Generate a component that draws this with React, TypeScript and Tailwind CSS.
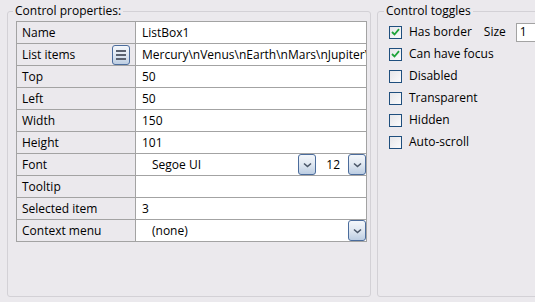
import { ReactNode } from 'react';

const font = { fontFamily: '"Open Sans", "Noto Sans", sans-serif' };

function DropButton() {
  return (
    <div className="w-[18px] h-[21px] shrink-0 rounded-[3px] border border-[#4b6c9c] bg-gradient-to-b from-[#f4f7fb] via-[#dfe7f1] to-[#bccde2] flex items-center justify-center">
      <svg width="9" height="6" viewBox="0 0 9 6">
        <path d="M1 1.5 L4.5 4.5 L8 1.5" stroke="#4a5668" strokeWidth="1.6" fill="none" />
      </svg>
    </div>
  );
}

function ListButton() {
  return (
    <div className="w-[18px] h-[20px] shrink-0 rounded-[3px] border border-[#4b6c9c] bg-gradient-to-b from-[#f4f7fb] via-[#dfe7f1] to-[#bccde2] flex flex-col items-center justify-center gap-[2px]">
      <div className="w-[10px] h-[2px] bg-[#5b6270]" />
      <div className="w-[10px] h-[2px] bg-[#5b6270]" />
      <div className="w-[10px] h-[2px] bg-[#5b6270]" />
    </div>
  );
}

function Check({ checked, label, extra }: { checked?: boolean; label: string; extra?: ReactNode }) {
  return (
    <div className="h-[22px] flex items-center whitespace-nowrap">
      <div className="w-[13px] h-[13px] shrink-0 border border-[#1f4f7e] bg-gradient-to-br from-[#e6e6e9] to-[#fbfbfc] flex items-center justify-center">
        {checked && (
          <svg width="9" height="8" viewBox="0 0 9 8">
            <path d="M1 4 L3.5 6.5 L8 1.2" stroke="#1fa33a" strokeWidth="1.8" fill="none" />
          </svg>
        )}
      </div>
      <span className="ml-[7px]">{label}</span>
      {extra}
    </div>
  );
}

export default function App() {
  const rows: { label: string; value: ReactNode; labelExtra?: ReactNode }[] = [
    { label: 'Name', value: <span className="pl-[6px]">ListBox1</span> },
    {
      label: 'List items',
      labelExtra: <ListButton />,
      value: <span className="pl-[6px] whitespace-nowrap">Mercury\nVenus\nEarth\nMars\nJupiter\nSaturn</span>,
    },
    { label: 'Top', value: <span className="pl-[6px]">50</span> },
    { label: 'Left', value: <span className="pl-[6px]">50</span> },
    { label: 'Width', value: <span className="pl-[6px]">150</span> },
    { label: 'Height', value: <span className="pl-[6px]">101</span> },
    {
      label: 'Font',
      value: (
        <div className="flex items-center h-full w-full">
          <span className="pl-[16px] flex-1">Segoe UI</span>
          <DropButton />
          <span className="w-[32px] text-right pr-[8px]">12</span>
          <DropButton />
        </div>
      ),
    },
    { label: 'Tooltip', value: <span /> },
    { label: 'Selected item', value: <span className="pl-[6px]">3</span> },
    {
      label: 'Context menu',
      value: (
        <div className="flex items-center h-full w-full">
          <span className="pl-[16px] flex-1">(none)</span>
          <DropButton />
        </div>
      ),
    },
  ];

  return (
    <div className="w-[535px] h-[302px] overflow-hidden bg-[#ebe9ed] text-[12px] text-black flex pt-[3px]" style={font}>
      <fieldset className="ml-[7px] w-[364px] shrink-0 h-[294px] border border-[#d3d1d6] rounded-[3px] pl-[8px] pt-[2px]">
        <legend className="-ml-[3px] px-[2px] leading-[16px]">Control properties:</legend>
        <div className="w-[351px] border-t border-l border-[#a3a3a3]">
          {rows.map((r) => (
            <div key={r.label} className="flex h-[22px] border-b border-[#a3a3a3]">
              <div className="w-[119px] shrink-0 border-r border-[#a3a3a3] bg-[#ebe9ed] flex items-center pl-[5px] pr-[5px]">
                <span className="flex-1">{r.label}</span>
                {r.labelExtra}
              </div>
              <div className="flex-1 bg-white border-r border-[#a3a3a3] flex items-center overflow-hidden">
                {r.value}
              </div>
            </div>
          ))}
        </div>
      </fieldset>
      <fieldset className="ml-[6px] w-[220px] shrink-0 h-[294px] border border-[#d3d1d6] rounded-[3px] pl-[11px] pt-[2px]">
        <legend className="-ml-[5px] px-[2px] leading-[16px]">Control toggles</legend>
        <div className="flex flex-col">
          <Check
            checked
            label="Has border"
            extra={
              <>
                <span className="ml-[12px]">Size</span>
                <div className="ml-[10px] w-[40px] h-[19px] shrink-0 bg-white border border-[#a3a3a3] flex items-center pl-[3px]">1</div>
              </>
            }
          />
          <Check checked label="Can have focus" />
          <Check label="Disabled" />
          <Check label="Transparent" />
          <Check label="Hidden" />
          <Check label="Auto-scroll" />
        </div>
      </fieldset>
    </div>
  );
}
